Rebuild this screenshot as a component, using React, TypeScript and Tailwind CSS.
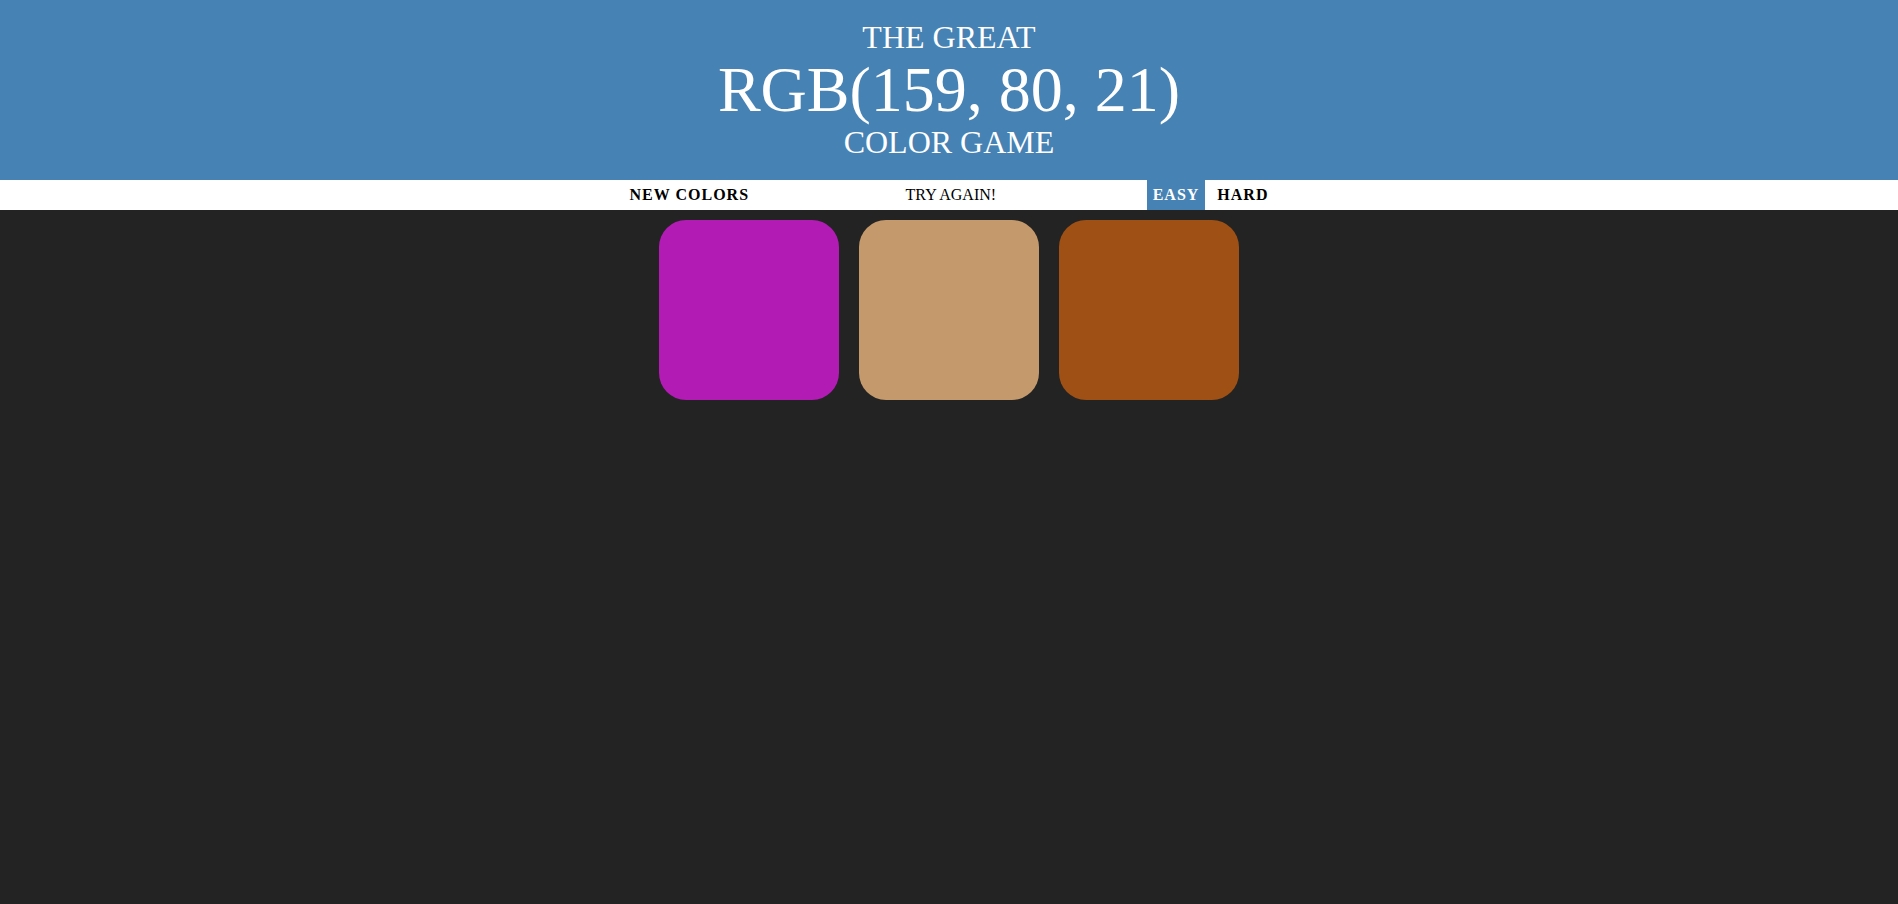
const squares = ["rgb(179, 27, 181)", "rgb(196, 154, 108)", "rgb(159, 80, 21)"];

function App() {
  return (
    <div className="min-h-screen bg-[#232323] font-['Liberation_Serif',serif]">
      <h1 className="bg-[#4682b4] py-5 text-center font-normal uppercase text-white">
        <div className="text-[32px] leading-[35px]">The Great</div>
        <div className="text-[64px] leading-[70px]">RGB(159, 80, 21)</div>
        <div className="text-[32px] leading-[35px]">Color Game</div>
      </h1>

      <div className="flex h-[30px] justify-center gap-[6px] bg-white text-base text-black">
        <button className="h-full px-1.5 font-bold uppercase tracking-[1px]">New Colors</button>
        <span className="flex w-[20%] items-center justify-center">TRY AGAIN!</span>
        <button className="h-full bg-[#4682b4] px-1.5 font-bold uppercase tracking-[1px] text-white">Easy</button>
        <button className="h-full px-1.5 font-bold uppercase tracking-[1px]">Hard</button>
      </div>

      <div className="mx-auto flex max-w-[600px]">
        {squares.map((c) => (
          <div
            key={c}
            className="m-[10px] h-[180px] w-[180px] rounded-[27px]"
            style={{ backgroundColor: c }}
          />
        ))}
      </div>
    </div>
  );
}

export default App;
